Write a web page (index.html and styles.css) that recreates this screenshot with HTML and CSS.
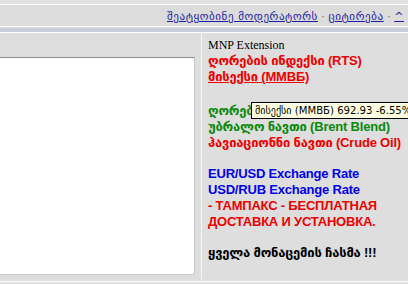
FILE: index.html
```html
<!DOCTYPE html>
<html>
<head>
<meta charset="utf-8">
<link rel="stylesheet" href="styles.css">
</head>
<body>
<div class="page">
  <div class="topstrip"></div>
  <div class="navbar">
    <a href="#">შეატყობინე მოდერატორს</a><span class="sep"> · </span><a href="#">ციტირება</a><span class="sep"> · </span><a href="#">^</a>
  </div>
  <div class="band"></div>
  <div class="main">
    <div class="leftcol">
      <div class="lefthead"></div>
      <div class="box"></div>
    </div>
    <div class="divider"></div>
    <div class="rightcol">
      <div class="line serif">MNP Extension</div>
      <div class="line red">ღორების ინდექსი (RTS)</div>
      <div class="line red u">მისექსი (ММВБ)</div>
      <div class="blank tall"></div>
      <div class="line green">ღორების ინდექსი (RTS)</div>
      <div class="line green">უბრალო ნავთი (Brent Blend)</div>
      <div class="line red">ჰავიაციონნი ნავთი (Crude Oil)</div>
      <div class="blank"></div>
      <div class="line blue">EUR/USD Exchange Rate</div>
      <div class="line blue">USD/RUB Exchange Rate</div>
      <div class="line red">- ТАМПАКС - БЕСПЛАТНАЯ</div>
      <div class="line red">ДОСТАВКА И УСТАНОВКА.</div>
      <div class="blank"></div>
      <div class="line black">ყველა მონაცემის ჩასმა !!!</div>
      <div class="tooltip">მისექსი (ММВБ) 692.93 -6.55%</div>
    </div>
  </div>
  <div class="footer"></div>
</div>
</body>
</html>
```
FILE: styles.css
```css
html, body {
  margin: 0;
  padding: 0;
  background: #dedede;
}
.page {
  width: 408px;
  height: 284px;
  overflow: hidden;
  background: #dedede;
}
.topstrip {
  height: 4px;
  background: #e2e2e2;
  border-bottom: 1px solid #ffffff;
}
.navbar {
  height: 21px;
  background: #dcdcdc;
  border-bottom: 1px solid #ffffff;
  text-align: right;
  padding-right: 4px;
  font-family: "DejaVu Sans", sans-serif;
  font-size: 11px;
  letter-spacing: 0.6px;
  line-height: 24px;
  white-space: nowrap;
}
.navbar a {
  color: #1a1aa6;
  text-decoration: underline;
}
.navbar .sep {
  color: #777777;
  letter-spacing: 0;
}
.band {
  height: 4px;
  margin-top: 1px;
  background: #c7d0dc;
  border-bottom: 1px solid #ffffff;
}
.main {
  display: flex;
  height: 246px;
}
.leftcol {
  width: 200px;
  display: flex;
  flex-direction: column;
}
.lefthead {
  height: 24px;
}
.box {
  width: 194px;
  height: 216px;
  background: #ffffff;
  border-top: 1px solid #8a8a8a;
  border-right: 1px solid #c4c4c4;
  border-bottom: 1px solid #c8c8c8;
}
.divider {
  width: 1px;
  background: #f4f4f4;
  margin-left: 1px;
}
.rightcol {
  position: relative;
  flex: 1;
  padding: 4px 0 0 6px;
  overflow: hidden;
}
.line {
  height: 16px;
  line-height: 16px;
  font-family: "Liberation Sans", "DejaVu Sans", sans-serif;
  font-weight: bold;
  font-size: 13px;
  white-space: nowrap;
  letter-spacing: -0.2px;
}
.serif {
  font-family: "Liberation Serif", serif;
  font-weight: normal;
  font-size: 12px;
  color: #000000;
  letter-spacing: 0;
}
.red { color: #f00000; }
.green { color: #0a8a0a; }
.blue { color: #0000f0; }
.black { color: #000000; }
.u { text-decoration: underline; }
.blank { height: 15px; }
.blank.tall { height: 18px; }
.tooltip {
  position: absolute;
  left: 49px;
  top: 69px;
  height: 15px;
  line-height: 15px;
  padding: 0 3px;
  background: #ffffe1;
  border: 1px solid #000000;
  font-family: "DejaVu Sans", sans-serif;
  font-size: 10.1px;
  white-space: nowrap;
  color: #000000;
}
.footer {
  height: 8px;
  border-top: 1px solid #ffffff;
  margin-top: 2px;
  background: #e2e2e2;
}
```
